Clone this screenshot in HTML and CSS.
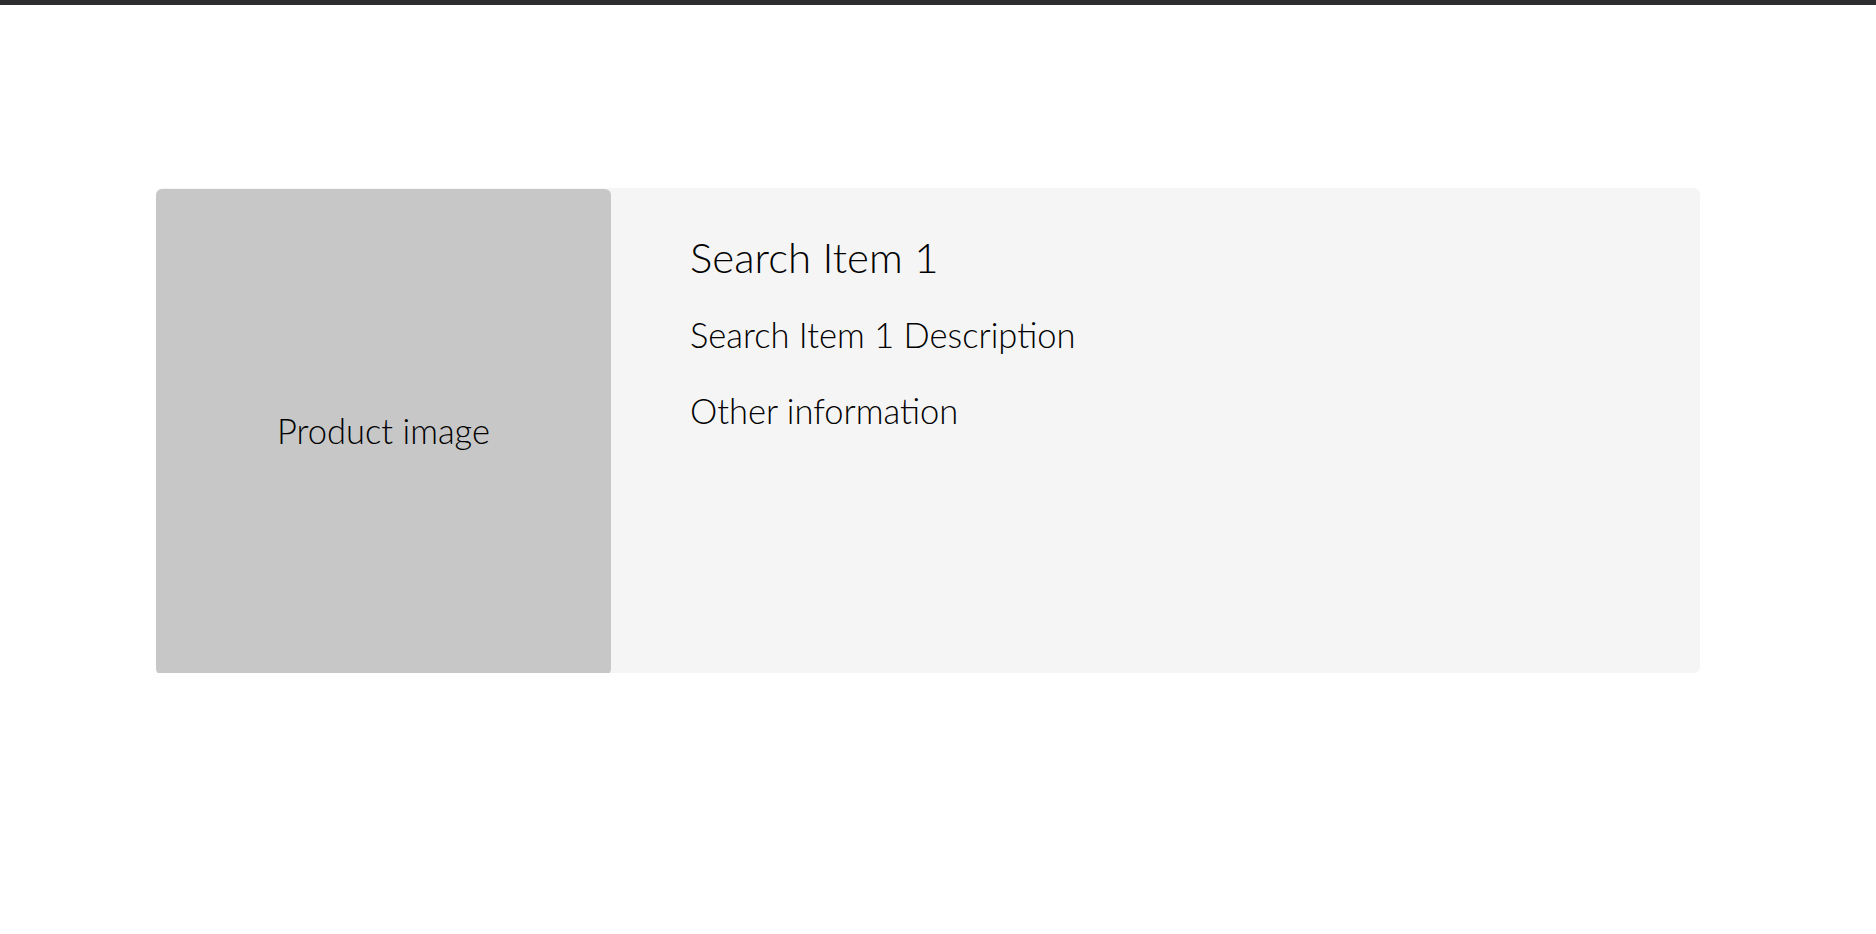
FILE: index.html
```html
<!DOCTYPE html>
<html>
<head>
<meta charset="utf-8">
<title>Search results</title>
<link rel="stylesheet" href="styles.css">
</head>
<body>
<div class="topbar"></div>
<main class="results">
  <article class="result-card">
    <div class="product-image"><span>Product image</span></div>
    <div class="result-info">
      <h2 class="result-title">Search Item 1</h2>
      <p class="result-desc">Search Item 1 Description</p>
      <p class="result-other">Other information</p>
    </div>
  </article>
</main>
</body>
</html>
```

FILE: styles.css
```css
html, body { margin: 0; padding: 0; background: #ffffff; }
body {
  font-family: "Lato", "Open Sans", sans-serif;
  font-weight: 300;
  color: #000000;
}
.topbar { height: 5px; background: #2d2d2f; }
.results { padding: 183px 0 0 156px; }
.result-card {
  display: flex;
  align-items: flex-start;
  width: 1544px;
  height: 485px;
  background: #f5f5f5;
  border-radius: 6px;
}
.product-image {
  flex: 0 0 455px;
  height: 486px;
  margin-top: 1px;
  box-sizing: border-box;
  padding-bottom: 3px;
  background: #c7c7c7;
  border-radius: 6px;
  display: flex;
  align-items: center;
  justify-content: center;
  font-size: 34.5px;
  line-height: 42px;
}
.result-info {
  display: flex;
  flex-direction: column;
  padding: 44px 0 0 79px;
}
.result-title {
  margin: 0;
  font-size: 42px;
  font-weight: 300;
  line-height: 50px;
}
.result-desc, .result-other {
  margin: 0;
  font-size: 34.5px;
  line-height: 42px;
}
.result-desc { margin-top: 32px; }
.result-other { margin-top: 34px; }
```
